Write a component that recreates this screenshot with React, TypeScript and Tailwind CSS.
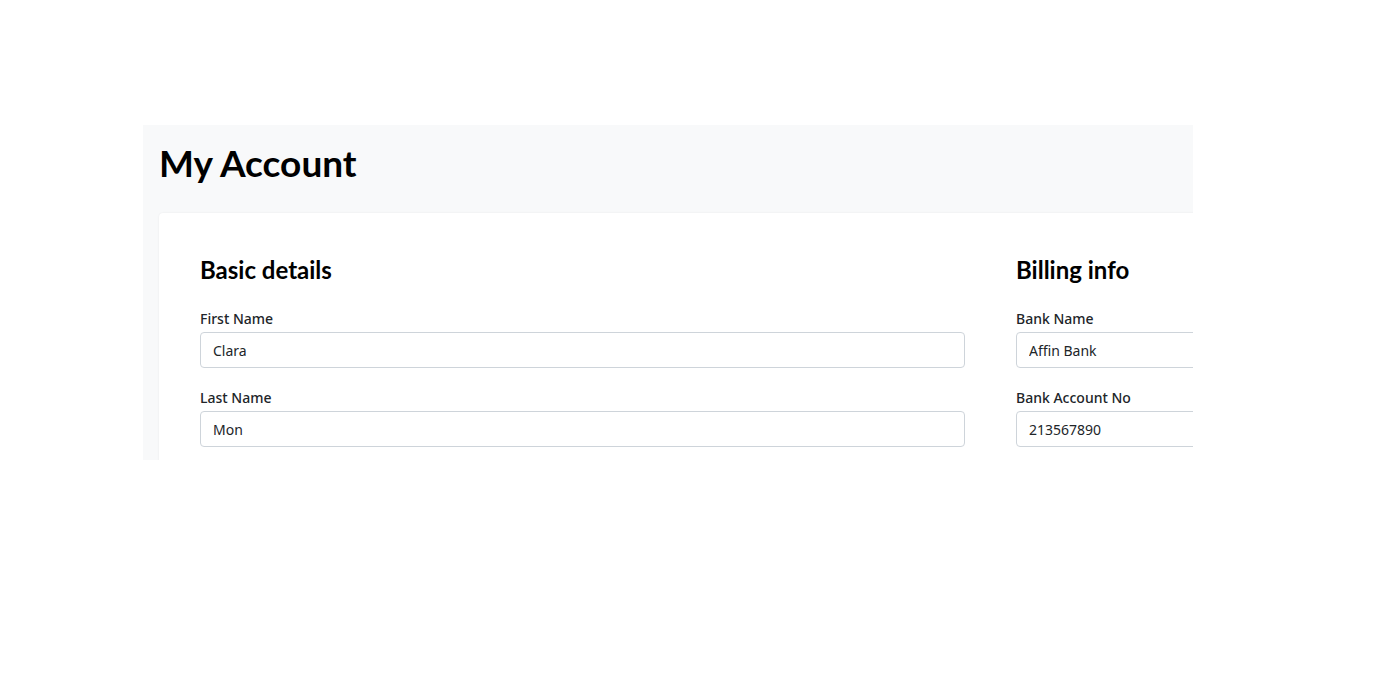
import React from "react";

interface FieldProps {
  label: string;
  value: string;
  className?: string;
}

function Field({ label, value, className }: FieldProps) {
  return (
    <div className={className}>
      <label className="mb-[3px] block text-[14px] font-medium leading-[21px] text-[#212529]">{label}</label>
      <input
        type="text"
        readOnly
        defaultValue={value}
        className="block h-[36px] w-full rounded-[4px] border border-[#ced4da] bg-white px-3 text-[14px] text-[#212529] outline-none"
      />
    </div>
  );
}

export default function App() {
  return (
    <div className="min-h-[678px] bg-white pt-[125px] pl-[143px] font-['Noto_Sans',sans-serif]">
      {/* Page panel, clipped at its edges */}
      <div className="h-[335px] w-[1050px] overflow-hidden bg-[#f8f9fa] pl-4">
        <h1 className="pt-4 font-['Lato',sans-serif] text-[37px] font-bold leading-[43px] text-black">My Account</h1>

        {/* Account card */}
        <div className="mt-[29px] w-[1300px] rounded-tl-[4px] bg-white pt-10 pr-10 pb-10 pl-[41px] shadow-[0_0_2px_rgba(0,0,0,0.08)]">
          <div className="flex gap-[51px]">
            <div className="w-[765px]">
              <h4 className="mt-[2px] mb-[24px] font-['Lato',sans-serif] text-[24px] font-bold leading-[29px] text-black">Basic details</h4>
              <Field label="First Name" value="Clara" />
              <Field label="Last Name" value="Mon" className="mt-[19px]" />
            </div>
            <div className="w-[400px]">
              <h4 className="mt-[2px] mb-[24px] font-['Lato',sans-serif] text-[24px] font-bold leading-[29px] text-black">Billing info</h4>
              <Field label="Bank Name" value="Affin Bank" />
              <Field label="Bank Account No" value="213567890" className="mt-[19px]" />
            </div>
          </div>
        </div>
      </div>
    </div>
  );
}
